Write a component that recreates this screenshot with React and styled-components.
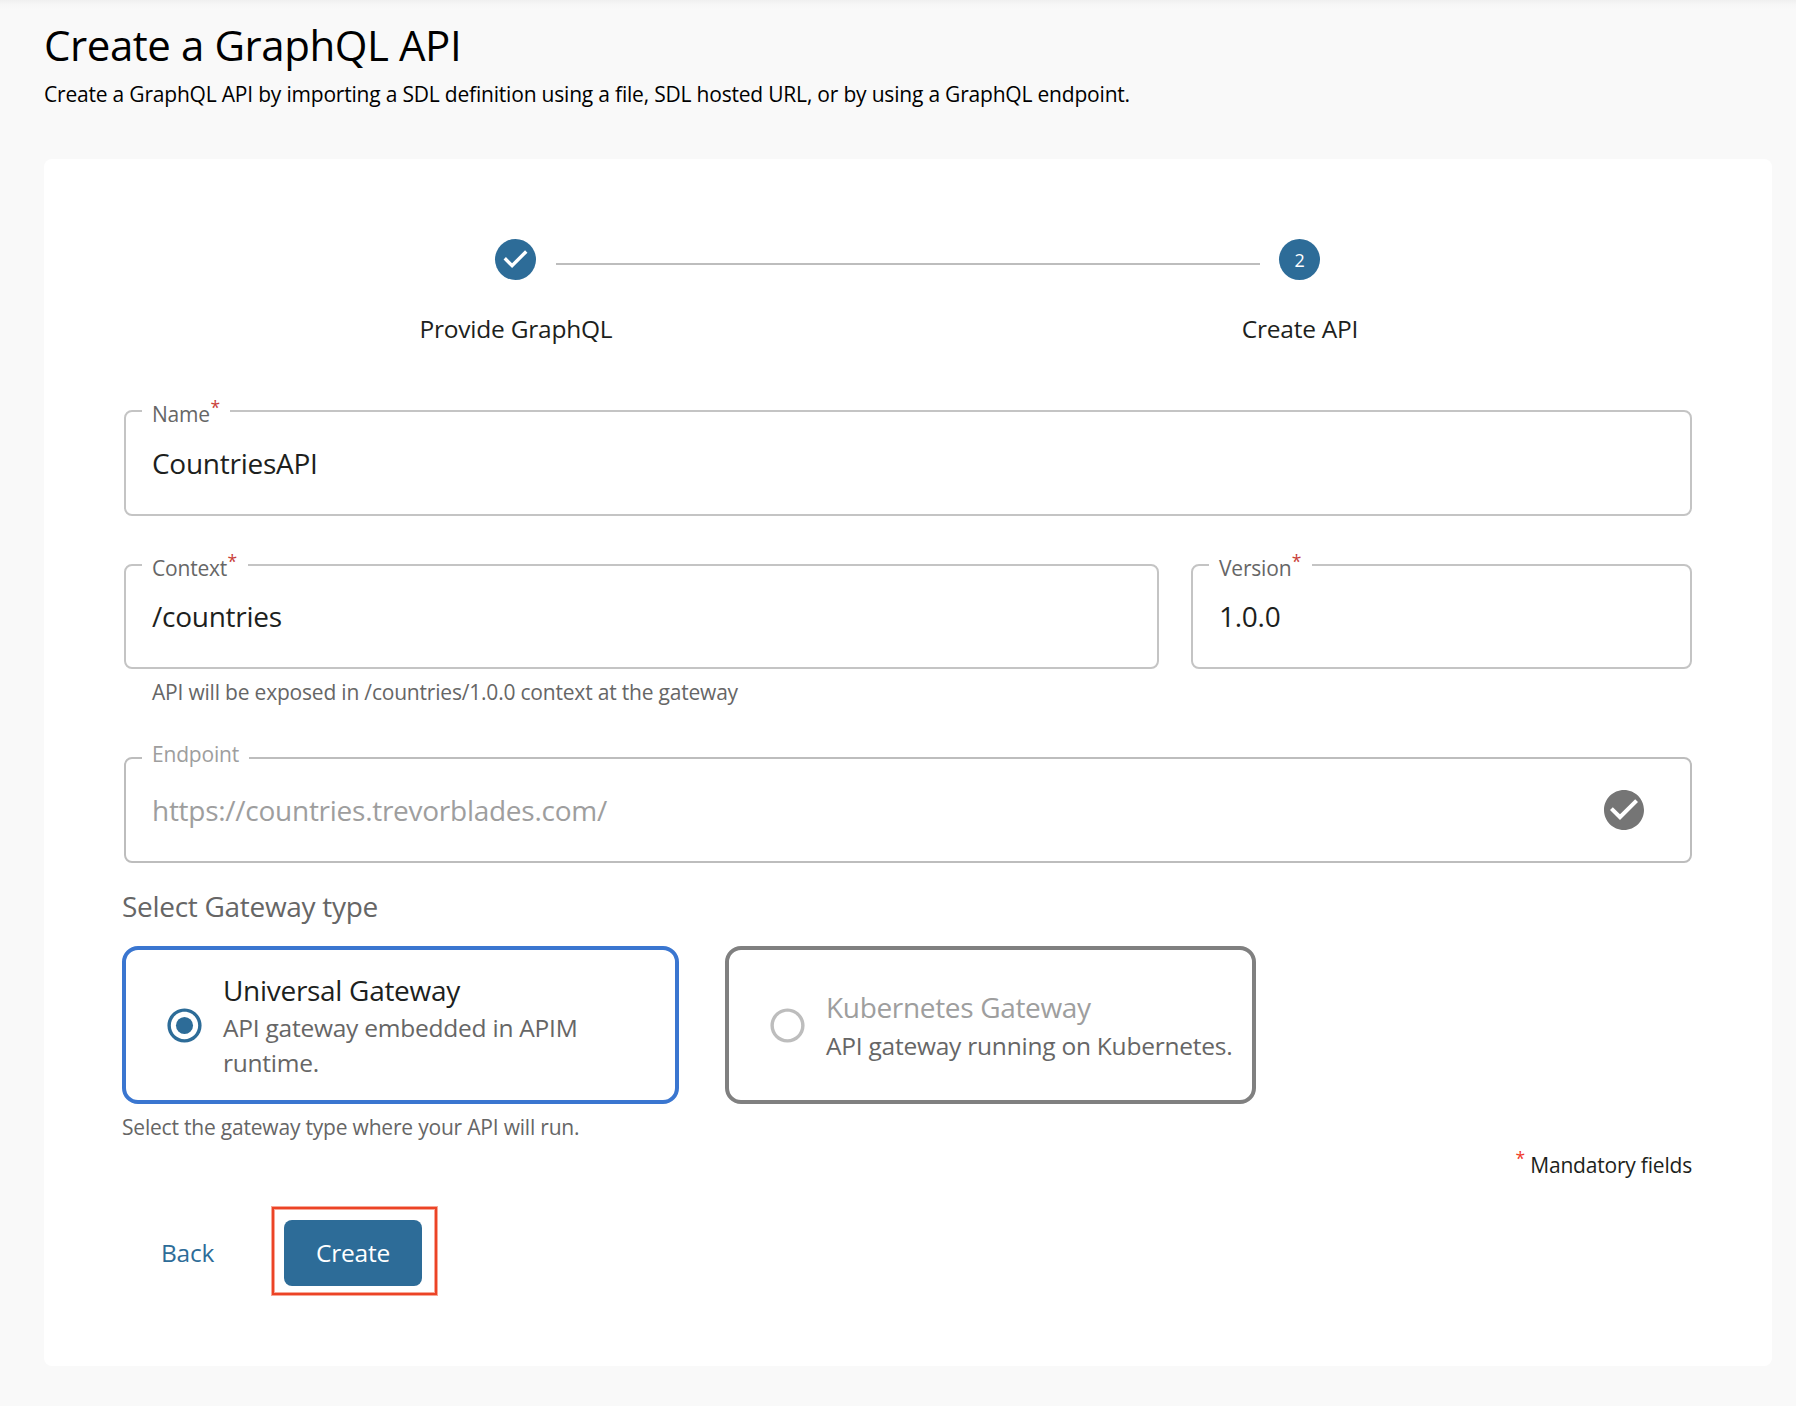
import React from "react";
import styled, { createGlobalStyle } from "styled-components";

const blue = "#2d6c98";

const GlobalStyle = createGlobalStyle`
  *, *::before, *::after { box-sizing: border-box; letter-spacing: -0.0095em; }
  body {
    margin: 0;
    background: #f9f9f9;
    color: #1d1f20;
    font-family: "Open Sans", "Noto Sans", sans-serif;
    font-size: 28px;
  }
  h1, h2, p { margin: 0; font-weight: 400; }
`;

const Page = styled.main`
  min-height: 1406px;
  padding: 20px 24px 40px 44px;
  background: linear-gradient(#f0f0f0, #f6f6f6 4px, #f9f9f9 10px);
`;

const Header = styled.header`
  margin-bottom: 50px;
  color: #000;
`;

const Title = styled.h1`
  font-size: 42px;
  line-height: 50px;
  letter-spacing: -0.0102em;
`;

const Subtitle = styled.p`
  margin-top: 9px;
  font-size: 21px;
  line-height: 30px;
  letter-spacing: -0.0095em;
`;

const Card = styled.section`
  padding: 80px 80px 71px;
  border-radius: 8px;
  background: #fff;
`;

const StepTrack = styled.div`
  display: flex;
  align-items: center;
  padding-left: 371px;
`;

const StepIcon = styled.span`
  display: flex;
  align-items: center;
  justify-content: center;
  width: 41px;
  height: 41px;
  border-radius: 50%;
  background: ${blue};
  color: #fff;

  svg { display: block; fill: #fff; }
`;

const StepNumber = styled.span`
  padding-top: 2px;
  font-size: 18px;
  line-height: 39px;
`;

const StepLine = styled.span`
  width: 704px;
  height: 2px;
  margin: 9px 19px 0 20px;
  background: #bdbdbd;
`;

const StepLabels = styled.div`
  display: grid;
  grid-template-columns: 1fr 1fr;
  margin-top: 31px;
  font-size: 24.5px;
  line-height: 36px;
  text-align: center;
`;

const FieldRow = styled.div`
  display: grid;
  grid-template-columns: ${(p) => p.$columns || "1fr"};
  gap: 32px;
  margin-top: ${(p) => p.$space}px;
`;

const FieldBox = styled.div`
  position: relative;
  display: flex;
  align-items: center;
  height: ${(p) => (p.$compact ? 105 : 106)}px;
  padding: 0 42px ${(p) => (p.$compact ? 1 : 0)}px 26px;
  border: 2px solid ${(p) => (p.$disabled ? "#bdbdbd" : "#c4c4c4")};
  border-radius: 8px;
`;

const FieldLabel = styled.label`
  position: absolute;
  top: ${(p) => (p.$disabled ? -17 : -13)}px;
  left: 16px;
  height: 24px;
  padding: 0 10.5px 0 10px;
  background: #fff;
  color: ${(p) => (p.$disabled ? "#9e9e9e" : "#666")};
  font-size: 21px;
  line-height: 24px;
  white-space: nowrap;
`;

const Asterisk = styled.span`
  display: inline-block;
  margin-left: 0.5px;
  color: ${(p) => p.$color || "#c9403a"};
  font-size: 17.5px;
  line-height: 1;
  vertical-align: 8px;
`;

const FieldInput = styled.input`
  flex: 1;
  min-width: 0;
  height: 40px;
  padding: 0;
  border: 0;
  outline: 0;
  background: transparent;
  color: ${(p) => (p.disabled ? "#9e9e9e" : "#1d1f20")};
  font: inherit;
  line-height: 40px;
`;

const ValidIcon = styled.svg`
  flex: none;
  width: 48px;
  height: 48px;
  fill: #757575;
`;

const HelperText = styled.p`
  margin: 6px 0 0 ${(p) => p.$indent}px;
  color: #666;
  font-size: 21px;
  line-height: 35px;
`;

const Gateway = styled.section`
  margin: 23px 0 0 -2px;
`;

const GatewayTitle = styled.h2`
  color: #666;
  font-size: 28px;
  line-height: 40px;
  letter-spacing: -0.0105em;
`;

const GatewayOptions = styled.div`
  display: flex;
  gap: 46px;
  margin-top: 20px;
`;

const Option = styled.div`
  display: flex;
  align-items: center;
  gap: 18px;
  width: ${(p) => p.$width}px;
  height: 158px;
  padding: 0 14px 0 38px;
  border: 4px solid ${(p) => (p.$selected ? "#3a76d0" : "#808080")};
  border-radius: 16px;
`;

const RadioIcon = styled.svg`
  flex: none;
  width: 41px;
  height: 41px;
  fill: ${(p) => (p.$selected ? blue : "#bdbdbd")};
`;

const OptionName = styled.div`
  color: ${(p) => (p.$selected ? "#1d1f20" : "#9e9e9e")};
  line-height: ${(p) => (p.$selected ? 40 : 41)}px;
  letter-spacing: ${(p) => (p.$selected ? -0.0105 : -0.012)}em;
`;

const OptionText = styled.p`
  color: #666;
  font-size: 24.5px;
  line-height: 35px;
`;

const Mandatory = styled.p`
  margin-top: 5px;
  font-size: 21px;
  line-height: 30px;
  height: 30px;
  text-align: right;
`;

const Actions = styled.div`
  display: flex;
  align-items: flex-start;
  gap: 30px;
  margin-top: 27px;
  padding-left: 9px;
`;

const Button = styled.button`
  width: ${(p) => (p.$primary ? 138 : 109)}px;
  height: 66px;
  margin-top: ${(p) => (p.$primary ? 0 : 13)}px;
  padding: 0 0 2px;
  border: 0;
  border-radius: 8px;
  background: ${(p) => (p.$primary ? blue : "transparent")};
  color: ${(p) => (p.$primary ? "#fff" : blue)};
  font: inherit;
  font-size: 24.5px;
`;

const Highlight = styled.div`
  display: flex;
  padding: 11px 13px 7px 10px;
  border: 2px solid #ec4326;
  box-shadow: 0 0 0 1px #f7a797, inset 0 0 0 1px #f7a797;
`;

function Field({ label, value, required, disabled, compact, children }) {
  const id = label.toLowerCase();
  return (
    <FieldBox $disabled={disabled} $compact={compact}>
      <FieldLabel htmlFor={id} $disabled={disabled}>
        {label}
        {required && <Asterisk>*</Asterisk>}
      </FieldLabel>
      <FieldInput id={id} defaultValue={value} disabled={disabled} />
      {children}
    </FieldBox>
  );
}

function GatewayOption({ name, text, width, selected }) {
  return (
    <Option $width={width} $selected={selected}>
      <RadioIcon viewBox="0 0 24 24" $selected={selected}>
        <path d="M12 2C6.48 2 2 6.48 2 12s4.48 10 10 10 10-4.48 10-10S17.52 2 12 2zm0 18c-4.42 0-8-3.58-8-8s3.58-8 8-8 8 3.58 8 8-3.58 8-8 8z" />
        {selected && <circle cx="12" cy="12" r="5" />}
      </RadioIcon>
      <div>
        <OptionName $selected={selected}>{name}</OptionName>
        <OptionText>{text}</OptionText>
      </div>
    </Option>
  );
}

export default function App() {
  return (
    <>
      <GlobalStyle />
      <Page>
        <Header>
          <Title>Create a GraphQL API</Title>
          <Subtitle>
            Create a GraphQL API by importing a SDL definition using a file, SDL hosted URL, or by using a GraphQL endpoint.
          </Subtitle>
        </Header>
        <Card>
          <StepTrack>
            <StepIcon>
              <svg width="41" height="41" viewBox="0 0 24 24">
                <path d="M10 17l-5-5 1.4-1.4 3.6 3.6 7.6-7.6L19 8l-9 9z" />
              </svg>
            </StepIcon>
            <StepLine />
            <StepIcon>
              <StepNumber>2</StepNumber>
            </StepIcon>
          </StepTrack>
          <StepLabels>
            <span>Provide GraphQL</span>
            <span>Create API</span>
          </StepLabels>

          <FieldRow $space={63}>
            <Field label="Name" value="CountriesAPI" required />
          </FieldRow>
          <FieldRow $space={48} $columns="1035px 1fr">
            <Field label="Context" value="/countries" compact required />
            <Field label="Version" value="1.0.0" compact required />
          </FieldRow>
          <HelperText $indent={28}>API will be exposed in /countries/1.0.0 context at the gateway</HelperText>
          <FieldRow $space={47}>
            <Field label="Endpoint" value="https://countries.trevorblades.com/" disabled>
              <ValidIcon viewBox="0 0 24 24">
                <path d="M12 2C6.48 2 2 6.48 2 12s4.48 10 10 10 10-4.48 10-10S17.52 2 12 2zm-2 15l-5-5 1.41-1.41L10 14.17l7.59-7.59L19 8l-9 9z" />
              </ValidIcon>
            </Field>
          </FieldRow>

          <Gateway>
            <GatewayTitle>Select Gateway type</GatewayTitle>
            <GatewayOptions>
              <GatewayOption
                name="Universal Gateway"
                text="API gateway embedded in APIM runtime."
                width={557}
                selected
              />
              <GatewayOption name="Kubernetes Gateway" text="API gateway running on Kubernetes." width={531} />
            </GatewayOptions>
            <HelperText $indent={0}>Select the gateway type where your API will run.</HelperText>
          </Gateway>

          <Mandatory>
            <Asterisk $color="#f03a2a">*</Asterisk> Mandatory fields
          </Mandatory>

          <Actions>
            <Button>Back</Button>
            <Highlight>
              <Button $primary>Create</Button>
            </Highlight>
          </Actions>
        </Card>
      </Page>
    </>
  );
}
